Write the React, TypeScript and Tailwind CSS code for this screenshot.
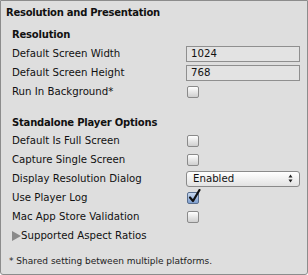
const font = { fontFamily: '"DejaVu Sans", sans-serif' };

function Checkbox({ checked = false }: { checked?: boolean }) {
  return (
    <div
      className={
        "relative h-[12px] w-[12px] rounded-[2px] border " +
        (checked
          ? "border-[#5a6f8f] bg-gradient-to-b from-[#c9d9ef] to-[#7f9fcf]"
          : "border-[#8a8a8a] bg-gradient-to-b from-[#ffffff] to-[#cfcfcf]")
      }
    >
      {checked && (
        <svg className="absolute -top-[4px] left-[0px]" width="13" height="15" viewBox="0 0 13 15">
          <path d="M2 8.5 L5 12 L11.5 1" fill="none" stroke="#111" strokeWidth="2.2" strokeLinecap="round" strokeLinejoin="round" />
        </svg>
      )}
    </div>
  );
}

function Row({ label, children }: { label: string; children?: React.ReactNode }) {
  return (
    <div className="flex h-[19px] items-center">
      <div className="w-[185px] pl-[11px] text-[10.2px] text-[#111]">{label}</div>
      <div className="flex items-center">{children}</div>
    </div>
  );
}

function Field({ value }: { value: string }) {
  return (
    <div className="flex h-[16px] w-[114px] items-center border border-[#8f8f8f] bg-[#e3e3e3] pl-[4px] text-[10.2px] text-[#111]">
      {value}
    </div>
  );
}

export default function App() {
  return (
    <div style={font} className="flex h-[275px] w-[308px] flex-col rounded-b-[3px] border border-[#8c8c8c] bg-[#dedede]">
      <div className="flex h-[22px] items-center pl-[5px] text-[10px] font-bold tracking-[-0.25px] text-[#111]">
        Resolution and Presentation
      </div>
      <div className="mt-[2px] flex h-[19px] items-center pl-[11px] text-[10px] font-bold tracking-[-0.2px] text-[#111]">
        Resolution
      </div>
      <Row label="Default Screen Width">
        <Field value="1024" />
      </Row>
      <Row label="Default Screen Height">
        <Field value="768" />
      </Row>
      <Row label="Run In Background*">
        <div className="pl-[1px]">
          <Checkbox />
        </div>
      </Row>
      <div className="mt-[12px] flex h-[19px] items-center pl-[11px] text-[10px] font-bold tracking-[-0.2px] text-[#111]">
        Standalone Player Options
      </div>
      <div className="-mt-[1px]">
        <Row label="Default Is Full Screen">
          <div className="pl-[1px]">
            <Checkbox />
          </div>
        </Row>
        <Row label="Capture Single Screen">
          <div className="pl-[1px]">
            <Checkbox />
          </div>
        </Row>
        <Row label="Display Resolution Dialog">
          <div className="flex h-[16px] w-[114px] items-center justify-between rounded-[3px] border border-[#8a8a8a] bg-gradient-to-b from-[#ffffff] to-[#e2e2e2] pl-[6px] pr-[6px] text-[10.2px] text-[#111]">
            <span>Enabled</span>
            <svg width="5" height="9" viewBox="0 0 5 9">
              <path d="M2.5 0.5 L4.5 3.5 L0.5 3.5 Z M2.5 8.5 L4.5 5.5 L0.5 5.5 Z" fill="#222" />
            </svg>
          </div>
        </Row>
        <Row label="Use Player Log">
          <div className="pl-[1px]">
            <Checkbox checked />
          </div>
        </Row>
        <Row label="Mac App Store Validation">
          <div className="pl-[1px]">
            <Checkbox />
          </div>
        </Row>
        <div className="flex h-[19px] items-center pl-[11px] text-[10.2px] text-[#111]">
          <svg width="9" height="10" viewBox="0 0 9 10">
            <path d="M0 0 L9 5 L0 10 Z" fill="#8a8a8a" />
          </svg>
          <span>Supported Aspect Ratios</span>
        </div>
      </div>
      <div className="mt-[8px] flex h-[18px] items-center pl-[8px] text-[9px] text-[#222]">
        * Shared setting between multiple platforms.
      </div>
    </div>
  );
}
